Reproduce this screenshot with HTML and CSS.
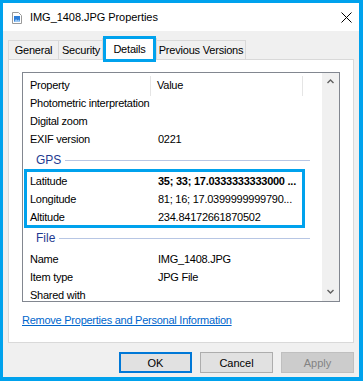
FILE: index.html
```html
<!DOCTYPE html>
<html lang="en">
<head>
    <meta charset="UTF-8">
    <title>IMG_1408.JPG Properties</title>
    <link rel="stylesheet" href="styles.css">
</head>
<body>
<div class="window">
    <div class="titlebar">
        <svg class="file-icon" width="10" height="12" viewBox="0 0 10 12">
            <path d="M0.5 0.5H6.5L9.5 3.5V11.5H0.5Z" fill="#fff" stroke="#9a9a9a"/>
            <rect x="2" y="4" width="6" height="6" fill="#2f7fd8"/>
            <path d="M2 10L4 7L5.5 8.5L6.5 7.5L8 9V10Z" fill="#9cc8f2"/>
        </svg>
        <span class="title">IMG_1408.JPG Properties</span>
        <svg class="close" width="11" height="11" viewBox="0 0 11 11">
            <path d="M0.5 0.5L10.5 10.5M10.5 0.5L0.5 10.5" stroke="#000" stroke-width="1"/>
        </svg>
    </div>

    <ul class="tabs">
        <li class="tab t-general">General</li>
        <li class="tab t-security">Security</li>
        <li class="tab t-details active">Details</li>
        <li class="tab t-prev">Previous Versions</li>
    </ul>

    <div class="panel">
        <div class="list">
            <div class="rows">
                <div class="row head">
                    <span class="col-name">Property</span>
                    <span class="col-value">Value</span>
                    <span class="col-rest"></span>
                </div>
                <div class="row"><span class="col-name">Photometric interpretation</span><span class="col-value"></span></div>
                <div class="row"><span class="col-name">Digital zoom</span><span class="col-value"></span></div>
                <div class="row"><span class="col-name">EXIF version</span><span class="col-value">0221</span></div>

                <div class="group"><span>GPS</span><i></i></div>
                <div class="mark">
                    <div class="row"><span class="col-name">Latitude</span><span class="col-value bold">35; 33; 17.0333333333000 ...</span></div>
                    <div class="row"><span class="col-name">Longitude</span><span class="col-value">81; 16; 17.0399999999790...</span></div>
                    <div class="row"><span class="col-name">Altitude</span><span class="col-value">234.84172661870502</span></div>
                </div>

                <div class="group"><span>File</span><i></i></div>
                <div class="row"><span class="col-name">Name</span><span class="col-value">IMG_1408.JPG</span></div>
                <div class="row"><span class="col-name">Item type</span><span class="col-value">JPG File</span></div>
                <div class="row"><span class="col-name">Shared with</span><span class="col-value"></span></div>
            </div>
            <div class="scrollbar">
                <svg width="7" height="5" viewBox="0 0 7 5"><path d="M0.5 4L3.5 1L6.5 4" fill="none" stroke="#606060" stroke-width="1.4"/></svg>
                <svg width="7" height="5" viewBox="0 0 7 5"><path d="M0.5 1L3.5 4L6.5 1" fill="none" stroke="#606060" stroke-width="1.4"/></svg>
            </div>
        </div>
        <a class="link" href="#">Remove Properties and Personal Information</a>
    </div>

    <div class="buttons">
        <button class="btn default">OK</button>
        <button class="btn">Cancel</button>
        <button class="btn disabled">Apply</button>
    </div>
</div>
</body>
</html>
```

FILE: styles.css
```css
*{
    margin: 0;
    padding: 0;
    box-sizing: border-box;
}
body{
    font-family: "Liberation Sans", Arial, sans-serif;
    font-size: 11px;
    color: #000;
}
.window{
    width: 363px;
    height: 381px;
    border-style: solid;
    border-color: #00a2ed;
    border-width: 3px 4px 4px 3px;
    background: #f0f0f0;
    display: flex;
    flex-direction: column;
}

/* title bar */
.titlebar{
    height: 28px;
    background: #fff;
    display: flex;
    align-items: center;
    padding-left: 9px;
    padding-right: 7px;
}
.titlebar .file-icon{
    margin-right: 8px;
    margin-top: 1px;
}
.titlebar .title{
    letter-spacing: -0.05px;
}
.titlebar .close{
    margin-left: auto;
}

/* tabs */
.tabs{
    list-style: none;
    display: flex;
    align-items: flex-end;
    height: 19px;
    margin: 9px 5px 0 5px;
    position: relative;
    z-index: 1;
}
.tab{
    height: 19px;
    line-height: 18px;
    text-align: center;
    border: 1px solid #d9d9d9;
    border-bottom: 0;
    background: #f0f0f0;
    letter-spacing: -0.2px;
}
.t-general{ width: 51px; }
.t-security{ width: 46px; margin-left: -1px; }
.t-details{ width: 55px; margin-left: -2px; }
.t-prev{ width: 90px; margin-left: -1px; }
.tab.active{
    height: 22px;
    line-height: 20px;
    margin-bottom: -1px;
    background: #fff;
    position: relative;
}
.tab.active::after{
    content: "";
    position: absolute;
    top: -3px;
    left: 0;
    right: 0;
    bottom: -2px;
    border: 3px solid #00a2ed;
}

/* panel */
.panel{
    height: 284px;
    margin: 0 5px;
    border: 1px solid #d9d9d9;
    background: #fff;
    padding: 12px 13px 0 13px;
}
.list{
    height: 230px;
    border: 1px solid #828790;
    display: flex;
}
.rows{
    flex-grow: 1;
    overflow: hidden;
    letter-spacing: -0.25px;
}
.row{
    display: flex;
    height: 18px;
    line-height: 18px;
    white-space: nowrap;
}
.col-name{
    width: 128px;
    padding-left: 7px;
    flex-shrink: 0;
}
.col-value{
    width: 152px;
    padding-left: 7px;
    flex-shrink: 0;
}
.bold{
    font-weight: bold;
}
.row.head{
    height: 23px;
    line-height: 18px;
    padding-top: 3px;
    margin-bottom: -2px;
}
.row.head .col-name,
.row.head .col-value{
    border-right: 1px solid #e5e5e5;
}
.row.head .col-value{
    padding-left: 6px;
}
.group{
    height: 24px;
    display: flex;
    align-items: center;
    padding-left: 13px;
    padding-right: 12px;
    color: #1e3a91;
    font-size: 12px;
    letter-spacing: 0;
}
.group i{
    flex-grow: 1;
    height: 1px;
    background: #b7c6e4;
    margin-left: 4px;
    margin-top: 1px;
}
.mark{
    position: relative;
}
.mark::after{
    content: "";
    position: absolute;
    top: -3px;
    left: 1px;
    right: 17px;
    bottom: -2px;
    border: 3px solid #00a2ed;
}
.scrollbar{
    width: 17px;
    flex-shrink: 0;
    background: #f0f0f0;
    display: flex;
    flex-direction: column;
    justify-content: space-between;
    align-items: center;
    padding: 6px 0 7px 0;
}
.link{
    display: inline-block;
    margin-top: 11px;
    line-height: 14px;
    color: #0066cc;
    letter-spacing: -0.25px;
}

/* buttons */
.buttons{
    display: flex;
    justify-content: flex-end;
    margin: 9px 5px 0 0;
}
.btn{
    width: 73px;
    height: 21px;
    margin-left: 8px;
    font-family: "Liberation Sans", Arial, sans-serif;
    font-size: 11px;
    background: #e1e1e1;
    border: 1px solid #adadad;
    color: #000;
}
.btn.default{
    border: 2px solid #0078d7;
}
.btn.disabled{
    background: #cccccc;
    border-color: #bfbfbf;
    color: #838383;
}
```
